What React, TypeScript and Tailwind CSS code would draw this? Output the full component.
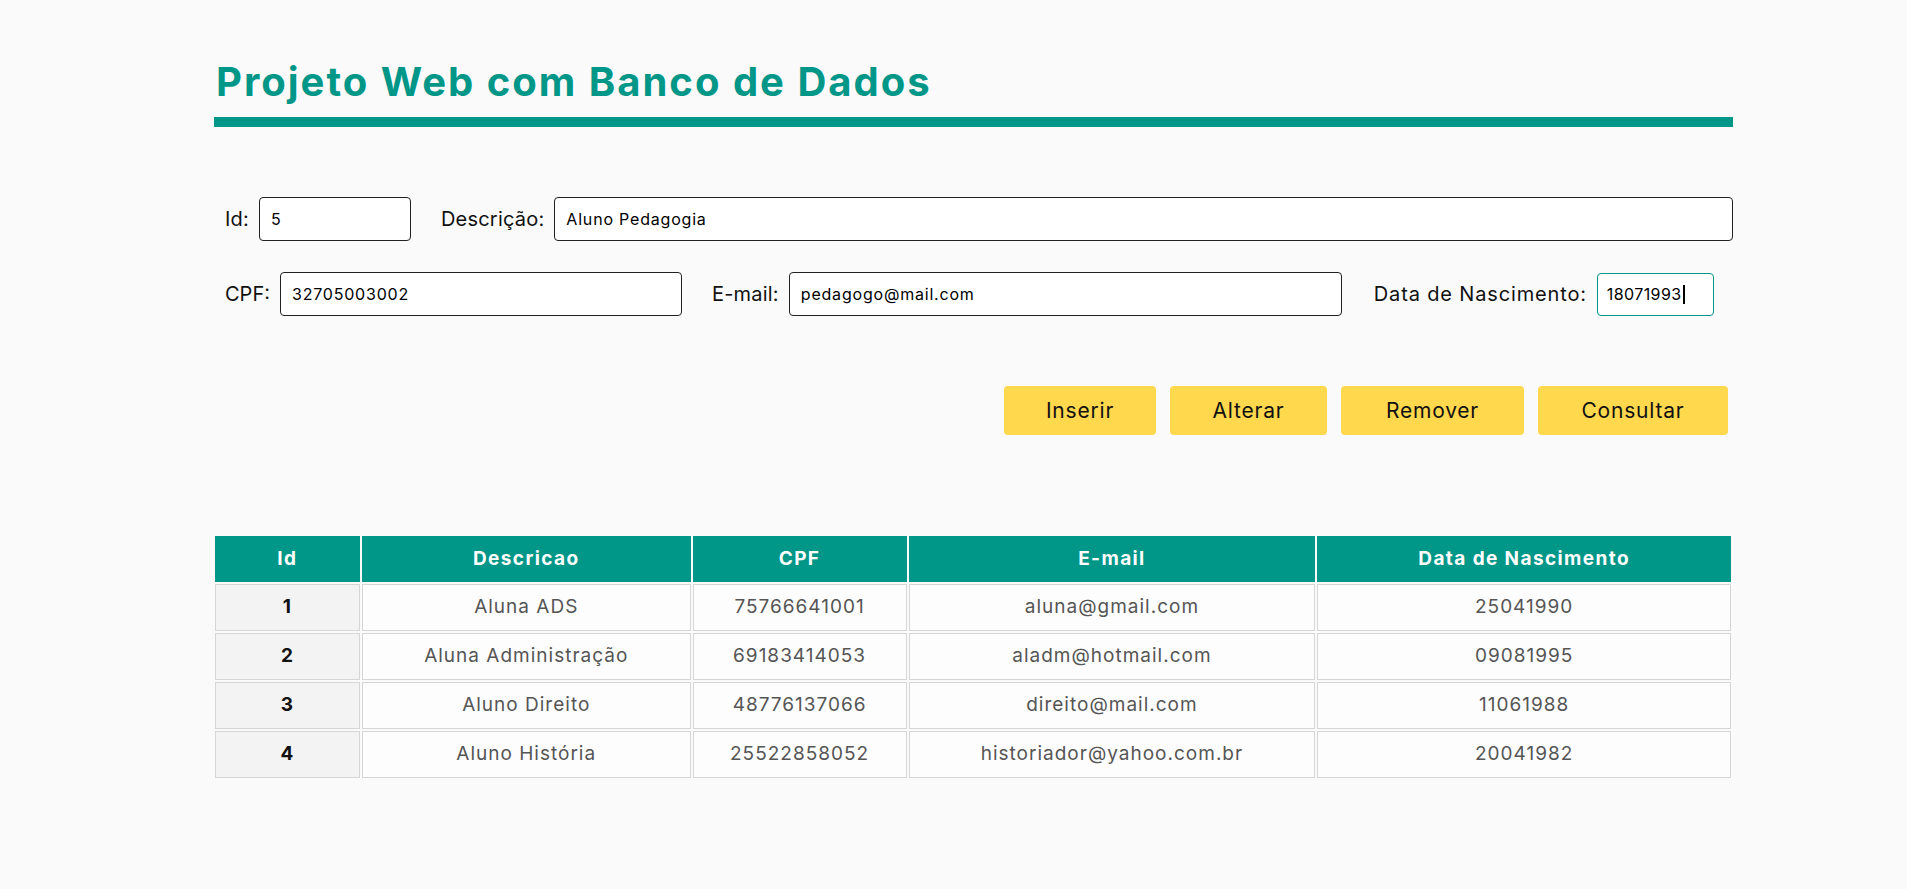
import React from "react";

const ROWS = [
  { id: 1, descricao: "Aluna ADS", cpf: "75766641001", email: "aluna@gmail.com", nascimento: "25041990" },
  { id: 2, descricao: "Aluna Administração", cpf: "69183414053", email: "aladm@hotmail.com", nascimento: "09081995" },
  { id: 3, descricao: "Aluno Direito", cpf: "48776137066", email: "direito@mail.com", nascimento: "11061988" },
  { id: 4, descricao: "Aluno História", cpf: "25522858052", email: "historiador@yahoo.com.br", nascimento: "20041982" },
];

const BUTTONS = [
  { label: "Inserir", w: "w-[152px]" },
  { label: "Alterar", w: "w-[157px]" },
  { label: "Remover", w: "w-[183px]" },
  { label: "Consultar", w: "w-[190px]" },
];

function Field({
  label,
  value,
  width,
  focused,
  labelClass = "tracking-[0.2px]",
}: {
  label: string;
  value: string;
  width: string;
  focused?: boolean;
  labelClass?: string;
}) {
  const grow = width === "flex-1";
  return (
    <label className={`flex items-center gap-[10px] ${grow ? "flex-1" : ""}`}>
      <span className={`text-[20px] text-[#111] ${labelClass}`}>{label}</span>
      {focused ? (
        // focused field, drawn with its text caret
        <span className={`flex h-[43px] ${width} items-center rounded-[4px] border border-[#009688] bg-white px-[9px] text-[16px] tracking-[0.4px] text-black`}>
          {value}
          <span className="ml-[1px] h-[19px] w-[2px] bg-black" />
        </span>
      ) : (
        <input
          readOnly
          value={value}
          className={`h-[44px] ${grow ? "flex-1" : width} rounded-[4px] border border-[#222] bg-white px-[11px] text-[16px] tracking-[0.8px] text-black outline-none`}
        />
      )}
    </label>
  );
}

export default function App() {
  return (
    <div className="min-h-screen bg-[#fafafa] pb-10" style={{ fontFamily: "Inter, 'Open Sans', sans-serif" }}>
      <div className="ml-[214px] w-[1519px] pt-[59px]">
        {/* Header */}
        <h1 className="pl-[2px] text-[40px] font-bold leading-[46px] tracking-[2px] text-[#009688]">Projeto Web com Banco de Dados</h1>
        <div className="mt-[12px] h-[10px] bg-[#009688]" />

        {/* Form */}
        <div className="mt-[70px] flex flex-col gap-[31px] pl-[11px]">
          <div className="flex items-center gap-[30px]">
            <Field label="Id:" value="5" width="w-[152px]" />
            <Field label="Descrição:" value="Aluno Pedagogia" width="flex-1" />
          </div>
          <div className="flex items-center">
            <Field label="CPF:" value="32705003002" width="w-[402px]" labelClass="tracking-[0px]" />
            <div className="w-[30px]" />
            <Field label="E-mail:" value="pedagogo@mail.com" width="w-[553px]" />
            <div className="w-[32px]" />
            <Field
              label="Data de Nascimento:"
              value="18071993"
              width="w-[117px]"
              labelClass="tracking-[0.85px]"
              focused
            />
          </div>
        </div>

        {/* Buttons */}
        <div className="mt-[70px] flex justify-end gap-[14px] pr-[5px]">
          {BUTTONS.map((b) => (
            <button
              key={b.label}
              className={`h-[49px] ${b.w} rounded-[4px] bg-[#ffd84d] text-[21px] tracking-[0.8px] text-[#111]`}
            >
              {b.label}
            </button>
          ))}
        </div>

        {/* Table */}
        <table className="-ml-[1px] mt-[99px] border-separate border-spacing-[2px] text-[19px] tracking-[1px]">
          <thead>
            <tr className="h-[46px] bg-[#009688] font-bold tracking-[1.4px] text-white">
              <th className="w-[145px]">Id</th>
              <th className="w-[329px]">Descricao</th>
              <th className="w-[214px]">CPF</th>
              <th className="w-[407px]">E-mail</th>
              <th className="w-[414px]">Data de Nascimento</th>
            </tr>
          </thead>
          <tbody>
            {ROWS.map((r) => (
              <tr key={r.id} className="h-[47px] text-center text-[#555]">
                <td className="border border-[#d6d6d6] bg-[#f3f3f3] font-bold text-[#111]">{r.id}</td>
                <td className="border border-[#d6d6d6] bg-[#fdfdfd]">{r.descricao}</td>
                <td className="border border-[#d6d6d6] bg-[#fdfdfd]">{r.cpf}</td>
                <td className="border border-[#d6d6d6] bg-[#fdfdfd]">{r.email}</td>
                <td className="border border-[#d6d6d6] bg-[#fdfdfd]">{r.nascimento}</td>
              </tr>
            ))}
          </tbody>
        </table>
      </div>
    </div>
  );
}
